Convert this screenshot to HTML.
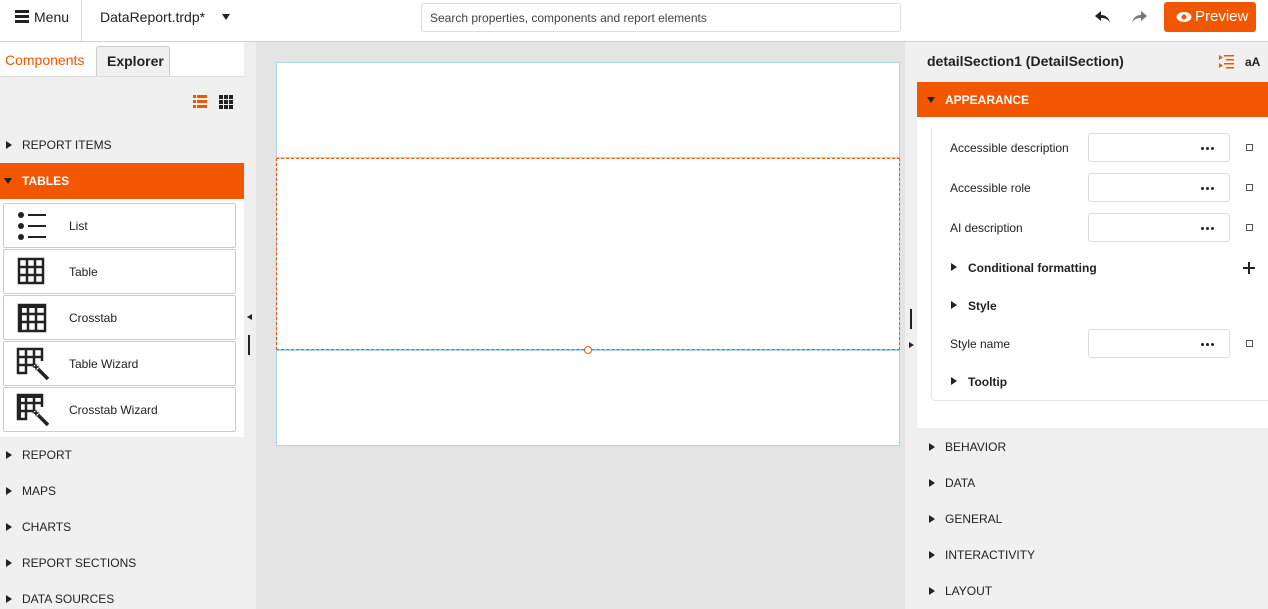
<!DOCTYPE html>
<html><head><meta charset="utf-8"><style>
*{box-sizing:border-box;margin:0;padding:0}
body{width:1268px;height:609px;overflow:hidden;font-family:"Liberation Sans",sans-serif;color:#222;background:#e4e4e4;position:relative;font-size:12px}
.abs{position:absolute}
.top{left:0;top:0;width:1268px;height:42px;background:#fff;border-bottom:1px solid #d0d0d0}
.hdr{font-size:12px;font-weight:bold;letter-spacing:0}
.tri{display:inline-block;width:0;height:0;border-top:4px solid transparent;border-bottom:4px solid transparent;border-left:6px solid #222}
.trid{display:inline-block;width:0;height:0;border-left:4px solid transparent;border-right:4px solid transparent;border-top:6px solid #222}
.item{left:3px;width:233px;height:45px;background:#fff;border:1px solid #ccc;border-radius:2px}
.item span{position:absolute;left:65px;top:15px;font-size:12px}
.field{left:1088px;width:142px;height:29px;background:#fff;border:1px solid #ddd;border-radius:3px}
.field b{position:absolute;right:15px;top:13px;width:3px;height:3px;border-radius:50%;background:#222;box-shadow:-5px 0 0 #222,-10px 0 0 #222}
.chk{left:1246px;width:7px;height:7px;border:1px solid #555}
.lbl{left:950px;font-size:12px}
</style></head><body>
<div class="abs top"></div>
<div class="abs" style="left:15px;top:10px;width:14px;height:3px;background:#222;box-shadow:0 5px 0 #222,0 10px 0 #222"></div>
<div class="abs" style="left:34px;top:9px;font-size:14px">Menu</div>
<div class="abs" style="left:81px;top:0;width:1px;height:41px;background:#e0e0e0"></div>
<div class="abs" style="left:100px;top:9px;font-size:14px">DataReport.trdp*</div>
<div class="abs trid" style="left:222px;top:14px"></div>
<div class="abs" style="left:421px;top:3px;width:480px;height:29px;border:1px solid #ddd;border-radius:3px;background:#fff;font-size:12px;color:#444;padding:7px 8px">Search properties, components and report elements</div>
<svg class="abs" style="left:1094px;top:9px" width="18" height="16" viewBox="0 0 18 16"><path d="M7 2 L1 7 L7 12 V9 C11 9 14 10 16 14 C15 9 12 6 7 6Z" fill="#222"/></svg>
<svg class="abs" style="left:1130px;top:9px" width="18" height="16" viewBox="0 0 18 16"><path d="M11 2 L17 7 L11 12 V9 C7 9 4 10 2 14 C3 9 6 6 11 6Z" fill="#777"/></svg>
<div class="abs" style="left:1164px;top:2px;width:92px;height:30px;background:#f25700;border-radius:3px;color:#fff;font-size:15px;padding:6px 0 0 31px">Preview</div>
<svg class="abs" style="left:1176px;top:11px" width="16" height="12" viewBox="0 0 16 12"><ellipse cx="8" cy="6" rx="7.5" ry="5" fill="#fff"/><circle cx="8" cy="6" r="2.5" fill="#f25700"/></svg>

<div class="abs" style="left:0;top:42px;width:244px;height:567px;background:#f0f0f0"></div>
<div class="abs" style="left:244px;top:42px;width:12px;height:567px;background:#efefef"></div>
<div class="abs" style="left:0;top:42px;width:244px;height:35px;background:#fff"></div>
<div class="abs" style="left:0;top:46px;width:96px;height:31px;background:#fff;color:#f25700;font-size:14px;padding:6px 0 0 5px">Components</div>
<div class="abs" style="left:96px;top:46px;width:74px;height:31px;background:#f0f0f0;border:1px solid #ccc;border-bottom:none;border-radius:3px 3px 0 0;font-size:14px;font-weight:bold;padding:6px 0 0 10px">Explorer</div>
<div class="abs" style="left:0;top:76px;width:244px;height:1px;background:#ddd"></div>
<svg class="abs" style="left:193px;top:95px" width="14" height="13"><g fill="#f25700"><rect x="0" y="0" width="3" height="3"/><rect x="4" y="0" width="10" height="3"/><rect x="0" y="5" width="3" height="3"/><rect x="4" y="5" width="10" height="3"/><rect x="0" y="10" width="3" height="3"/><rect x="4" y="10" width="10" height="3"/></g></svg>
<svg class="abs" style="left:219px;top:95px" width="14" height="14"><g fill="#222"><rect x="0" y="0" width="4" height="4"/><rect x="5" y="0" width="4" height="4"/><rect x="10" y="0" width="4" height="4"/><rect x="0" y="5" width="4" height="4"/><rect x="5" y="5" width="4" height="4"/><rect x="10" y="5" width="4" height="4"/><rect x="0" y="10" width="4" height="4"/><rect x="5" y="10" width="4" height="4"/><rect x="10" y="10" width="4" height="4"/></g></svg>
<div class="abs tri" style="left:6px;top:141px"></div><div class="abs" style="left:22px;top:138px">REPORT ITEMS</div>
<div class="abs" style="left:0;top:163px;width:244px;height:36px;background:#f25700"></div>
<div class="abs trid" style="left:4px;top:178px"></div><div class="abs hdr" style="left:22px;top:174px;color:#fff">TABLES</div>
<div class="abs" style="left:0;top:199px;width:244px;height:238px;background:#fff"></div>
<div class="abs item" style="top:203px"><svg class="abs" style="left:13px;top:7px" width="32" height="30"><g fill="#222"><circle cx="4" cy="4" r="3"/><circle cx="4" cy="15" r="3"/><circle cx="4" cy="26" r="3"/><rect x="11" y="3" width="18" height="2"/><rect x="11" y="14" width="18" height="2"/><rect x="11" y="25" width="18" height="2"/></g></svg><span>List</span></div>
<div class="abs item" style="top:249px"><svg class="abs" style="left:13px;top:7px" width="28" height="28"><g fill="none" stroke="#222" stroke-width="2.5"><rect x="2" y="2" width="24" height="24"/><path d="M10 2V26M18 2V26M2 10H26M2 18H26"/></g></svg><span>Table</span></div>
<div class="abs item" style="top:295px"><svg class="abs" style="left:13px;top:7px" width="30" height="30"><g fill="none" stroke="#222" stroke-width="2.5"><rect x="2" y="2" width="26" height="26"/><path d="M11 2V28M19 2V28M2 11H28M2 19H28"/></g><rect x="1" y="1" width="28" height="4" fill="#222"/><rect x="1" y="1" width="4" height="28" fill="#222"/></svg><span>Crosstab</span></div>
<div class="abs item" style="top:341px"><svg class="abs" style="left:12px;top:5px" width="36" height="34"><g fill="none" stroke="#222" stroke-width="2.5"><path d="M18 18H2V2H26V14M10 2V26H2V18M18 2V18M2 10H26"/><path d="M22 22L32 32" stroke-width="3.5"/></g><path d="M19 19l1-3 1 3 3 1-3 1-1 3-1-3-3-1z" fill="#222"/></svg><span>Table Wizard</span></div>
<div class="abs item" style="top:387px"><svg class="abs" style="left:12px;top:5px" width="36" height="34"><g fill="none" stroke="#222" stroke-width="2.5"><path d="M18 18H2V2H26V14M10 2V26H2V18M18 2V18M2 10H26"/><path d="M22 22L32 32" stroke-width="3.5"/></g><rect x="1" y="1" width="26" height="4" fill="#222"/><rect x="1" y="1" width="4" height="26" fill="#222"/><path d="M19 19l1-3 1 3 3 1-3 1-1 3-1-3-3-1z" fill="#222"/></svg><span>Crosstab Wizard</span></div>
<div class="abs tri" style="left:6px;top:451px"></div><div class="abs" style="left:22px;top:448px">REPORT</div>
<div class="abs tri" style="left:6px;top:487px"></div><div class="abs" style="left:22px;top:484px">MAPS</div>
<div class="abs tri" style="left:6px;top:523px"></div><div class="abs" style="left:22px;top:520px">CHARTS</div>
<div class="abs tri" style="left:6px;top:559px"></div><div class="abs" style="left:22px;top:556px">REPORT SECTIONS</div>
<div class="abs tri" style="left:6px;top:595px"></div><div class="abs" style="left:22px;top:592px">DATA SOURCES</div>
<div class="abs" style="left:247px;top:314px;width:0;height:0;border-top:3px solid transparent;border-bottom:3px solid transparent;border-right:5px solid #222"></div>
<div class="abs" style="left:248px;top:335px;width:2px;height:20px;background:#222"></div>

<div class="abs" style="left:276px;top:62px;width:624px;height:384px;background:#fff;border:1px solid #a8d8e8"></div>
<div class="abs" style="left:276px;top:157px;width:624px;height:1px;background:#a8d8e8"></div>
<div class="abs" style="left:276px;top:349px;width:624px;height:2px;background:#a8d8e8"></div>
<div class="abs" style="left:276px;top:158px;width:624px;height:192px;border:1px dashed #f25700"></div>
<div class="abs" style="left:584px;top:346px;width:8px;height:8px;border:1px solid #f25700;border-radius:50%;background:#fff"></div>

<div class="abs" style="left:905px;top:42px;width:363px;height:567px;background:#f0f0f0"></div>
<div class="abs" style="left:910px;top:309px;width:2px;height:20px;background:#222"></div>
<div class="abs" style="left:909px;top:342px;width:0;height:0;border-top:3px solid transparent;border-bottom:3px solid transparent;border-left:5px solid #222"></div>
<div class="abs" style="left:927px;top:53px;font-size:14px;font-weight:bold">detailSection1 (DetailSection)</div>
<svg class="abs" style="left:1219px;top:54px" width="16" height="15"><g fill="#f25700"><path d="M0 1l4 2.5L0 6z"/><path d="M0 9l4 2.5L0 14z"/><rect x="5" y="1" width="10" height="1.5"/><rect x="7" y="5" width="8" height="1.5"/><rect x="5" y="9" width="10" height="1.5"/><rect x="7" y="13" width="8" height="1.5"/></g></svg>
<div class="abs" style="left:1245px;top:55px;font-size:12px;font-weight:bold">aA</div>
<div class="abs" style="left:917px;top:82px;width:351px;height:35px;background:#f25700"></div>
<div class="abs trid" style="left:927px;top:97px"></div><div class="abs hdr" style="left:945px;top:93px;color:#fff">APPEARANCE</div>
<div class="abs" style="left:917px;top:117px;width:351px;height:311px;background:#fff"></div>
<div class="abs" style="left:931px;top:128px;width:345px;height:273px;border:1px solid #e4e4e4;border-top:none;border-radius:0 0 0 4px"></div>
<div class="abs lbl" style="top:141px">Accessible description</div>
<div class="abs field" style="top:133px"><b></b></div><div class="abs chk" style="top:144px"></div>
<div class="abs lbl" style="top:181px">Accessible role</div>
<div class="abs field" style="top:173px"><b></b></div><div class="abs chk" style="top:184px"></div>
<div class="abs lbl" style="top:221px">AI description</div>
<div class="abs field" style="top:213px"><b></b></div><div class="abs chk" style="top:224px"></div>
<div class="abs tri" style="left:951px;top:263px"></div><div class="abs" style="left:968px;top:261px;font-weight:bold">Conditional formatting</div>
<div class="abs" style="left:1243px;top:267px;width:12px;height:2px;background:#222"></div>
<div class="abs" style="left:1248px;top:262px;width:2px;height:12px;background:#222"></div>
<div class="abs tri" style="left:951px;top:301px"></div><div class="abs" style="left:968px;top:299px;font-weight:bold">Style</div>
<div class="abs lbl" style="top:337px">Style name</div>
<div class="abs field" style="top:329px"><b></b></div><div class="abs chk" style="top:340px"></div>
<div class="abs tri" style="left:951px;top:377px"></div><div class="abs" style="left:968px;top:375px;font-weight:bold">Tooltip</div>
<div class="abs tri" style="left:929px;top:443px"></div><div class="abs" style="left:945px;top:440px">BEHAVIOR</div>
<div class="abs tri" style="left:929px;top:479px"></div><div class="abs" style="left:945px;top:476px">DATA</div>
<div class="abs tri" style="left:929px;top:515px"></div><div class="abs" style="left:945px;top:512px">GENERAL</div>
<div class="abs tri" style="left:929px;top:551px"></div><div class="abs" style="left:945px;top:548px">INTERACTIVITY</div>
<div class="abs tri" style="left:929px;top:587px"></div><div class="abs" style="left:945px;top:584px">LAYOUT</div>
</body></html>
